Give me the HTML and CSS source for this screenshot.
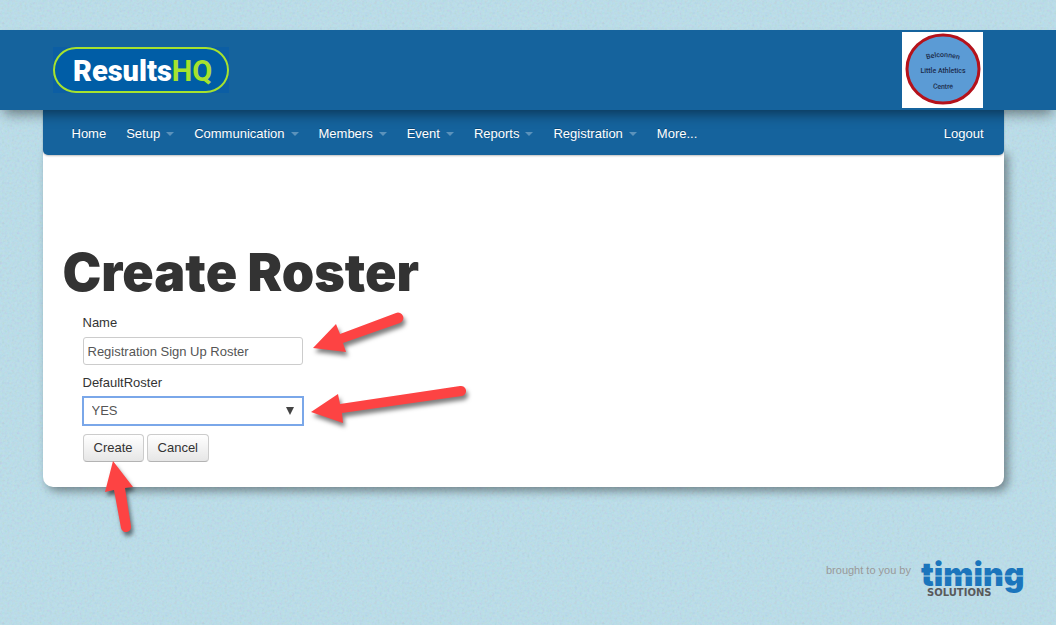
FILE: index.html
```
<!DOCTYPE html>
<html lang="en">
<head>
  <meta charset="UTF-8">
  <meta name="viewport" content="width=device-width, initial-scale=1.0">
  <title>Create Roster</title>
  <link rel="stylesheet" href="styles.css">
</head>
<body>
  <header class="header">
    <div class="container header-inner">
      <a href="#" class="logo">
        <svg width="176" height="46" viewBox="0 0 176 46">
          <rect class="logo-back" width="176" height="46"/>
          <rect class="logo-pill" x="1" y="1" width="174" height="44" rx="22"/>
          <text x="20" y="34"><tspan class="logo-results">Results</tspan><tspan class="logo-hq">HQ</tspan></text>
        </svg>
      </a>
      <svg class="club-badge" width="81" height="76" viewBox="0 0 81 76">
        <defs>
          <path id="arc-top" d="M20 29 Q41 21 62 29"/>
          <path id="arc-bottom" d="M25 55 Q41 59 57 55"/>
        </defs>
        <rect width="81" height="76" fill="#fff"/>
        <ellipse cx="41" cy="37" rx="36" ry="34" fill="#5b9bd5" stroke="#b5121b" stroke-width="3"/>
        <text><textPath href="#arc-top" startOffset="50%">Belconnen</textPath></text>
        <text x="41" y="41">Little Athletics</text>
        <text><textPath href="#arc-bottom" startOffset="50%">Centre</textPath></text>
      </svg>
    </div>
  </header>

  <div class="container">
    <nav class="nav">
      <a href="#">Home</a>
      <a href="#" class="dropdown">Setup</a>
      <a href="#" class="dropdown">Communication</a>
      <a href="#" class="dropdown">Members</a>
      <a href="#" class="dropdown">Event</a>
      <a href="#" class="dropdown">Reports</a>
      <a href="#" class="dropdown">Registration</a>
      <a href="#">More...</a>
      <a href="#" class="logout">Logout</a>
    </nav>

    <main class="page">
      <h1>Create Roster</h1>
      <form class="roster-form">
        <label for="name">Name</label>
        <input type="text" id="name" value="Registration Sign Up Roster">
        <label for="default-roster">DefaultRoster</label>
        <select id="default-roster">
          <option>YES</option>
          <option>NO</option>
        </select>
        <div class="buttons">
          <button type="submit">Create</button>
          <button type="button">Cancel</button>
        </div>
      </form>

      <!-- Pointer arrows over the form -->
      <svg class="arrows" width="480" height="400" viewBox="43 155 480 400">
        <path d="M313 348 L336 324 L340 334 L396 313 A5 5 0 0 1 400 323 L343 343 L346 352 Z"/>
        <path d="M311 412 L338 394 L340 404 L460 386 A5 5 0 0 1 462 396 L342 413 L343 423 Z"/>
        <path d="M113 461 L133 487 L125 488 L131 526 A5 5 0 0 1 121 528 L114 490 L105 492 Z"/>
      </svg>
    </main>
  </div>

  <footer class="footer">
    <span>brought to you by</span>
    <a href="#">
      <svg width="102" height="40" viewBox="0 0 102 40">
        <text class="timing" x="0" y="26">timing</text>
        <path class="timing-line" d="M0 16 H102"/>
        <text class="solutions" x="6" y="36">SOLUTIONS</text>
      </svg>
    </a>
  </footer>
</body>
</html>
```
FILE: styles.css
```
* {
  box-sizing: border-box;
}
body {
  margin: 0;
  padding-top: 30px;
  font-family: "Liberation Sans", Arial, sans-serif;
  font-size: 13px;
  line-height: 20px;
  color: #333;
  background-color: #badfec;
  background-image: url("data:image/svg+xml,%3Csvg xmlns='http://www.w3.org/2000/svg' width='200' height='200'%3E%3Cfilter id='n' x='0' y='0' width='1' height='1'%3E%3CfeTurbulence type='fractalNoise' baseFrequency='0.4' numOctaves='2' stitchTiles='stitch'/%3E%3C/filter%3E%3Crect width='200' height='200' filter='url(%23n)' opacity='0.22'/%3E%3C/svg%3E");
}
.container {
  max-width: 961px;
  margin: 0 auto;
  position: relative;
  right: 5px;
}
.header {
  position: relative;
  z-index: 2;
  background-color: #15639d;
  box-shadow: 0 8px 12px -4px rgba(0, 0, 0, 0.45);
}
.header-inner {
  display: flex;
  align-items: center;
  justify-content: space-between;
  height: 80px;
  padding: 0 21px 0 10px;
}
.logo svg,
.club-badge {
  display: block;
}
.logo-back {
  fill: #0c5ea4;
}
.logo-pill {
  fill: #005da6;
  stroke: #a6e22e;
  stroke-width: 2;
}
.logo text {
  font-family: Roboto, sans-serif;
  font-size: 29px;
}
.logo-results {
  font-weight: 900;
  fill: #fff;
}
.logo-hq {
  font-weight: 700;
  fill: #a6e22e;
}
.club-badge text {
  font-family: Roboto, sans-serif;
  font-size: 7px;
  font-weight: 500;
  fill: #1c2c4c;
  text-anchor: middle;
}
.nav {
  display: flex;
  gap: 20px;
  height: 45px;
  padding: 2px 20px 0 29px;
  align-items: center;
  background-color: #15639d;
  border-radius: 0 0 5px 5px;
  position: relative;
  z-index: 1;
  box-shadow: 0 1px 2px rgba(0, 0, 0, 0.25);
}
.nav a {
  color: #fff;
  text-decoration: none;
  text-shadow: 0 -1px 0 rgba(0, 0, 0, 0.25);
}
.dropdown::after {
  content: "";
  display: inline-block;
  margin-left: 6px;
  vertical-align: middle;
  border: 4px solid transparent;
  border-top-color: #5b92bb;
  border-bottom: 0;
}
.nav .logout {
  margin-left: auto;
}
.page {
  position: relative;
  margin-top: -5px;
  padding: 103px 20px 25px;
  background-color: #fff;
  border-radius: 0 0 10px 10px;
  box-shadow: 4px 4px 10px rgba(0, 0, 0, 0.4);
}
h1 {
  margin: 0 0 20px;
  font-family: Inter, "Arial Black", sans-serif;
  font-size: 52px;
  font-weight: 900;
  line-height: 40px;
}
.roster-form {
  display: flex;
  flex-direction: column;
  align-items: flex-start;
  padding-left: 20px;
}
.roster-form label {
  margin-bottom: 4px;
}
.roster-form input,
.roster-form select {
  width: 220px;
  height: 28px;
  margin-bottom: 8px;
  padding: 0 4px;
  border: 1px solid #ccc;
  border-radius: 3px;
  font: inherit;
  color: #555;
  background-color: #fff;
}
.roster-form select {
  appearance: none;
  padding: 0 8px;
  border-color: #7aa7e9;
  border-radius: 0;
  outline: 1px solid #7aa7e9;
  background-image: url("data:image/svg+xml,%3Csvg xmlns='http://www.w3.org/2000/svg' width='8' height='8'%3E%3Cpath d='M0 0h8L4 8z' fill='%23444'/%3E%3C/svg%3E");
  background-repeat: no-repeat;
  background-position: right 8px center;
}
.buttons {
  display: flex;
  gap: 3px;
  padding-top: 1px;
}
.buttons button {
  height: 28px;
  padding: 0 10px;
  font: inherit;
  color: #333;
  background: linear-gradient(#fff, #e6e6e6);
  border: 1px solid #ccc;
  border-bottom-color: #b3b3b3;
  border-radius: 4px;
}
.arrows {
  position: absolute;
  top: 5px;
  left: 0;
  pointer-events: none;
}
.arrows path {
  fill: #fd4343;
  filter: drop-shadow(2px 4px 2px rgba(0, 0, 0, 0.5));
}
.footer {
  display: flex;
  align-items: flex-start;
  justify-content: flex-end;
  gap: 10px;
  padding: 73px 33px 20px 0;
  font-size: 11px;
  color: #999;
}
.footer svg {
  display: block;
  overflow: visible;
}
.timing {
  font-family: Inter, sans-serif;
  font-size: 32px;
  font-weight: 900;
  fill: #1b75bc;
}
.timing-line {
  stroke: #b9deea;
  stroke-width: 1;
}
.solutions {
  font-family: "DejaVu Sans", sans-serif;
  font-size: 10px;
  font-weight: bold;
  fill: #58595b;
}
```
